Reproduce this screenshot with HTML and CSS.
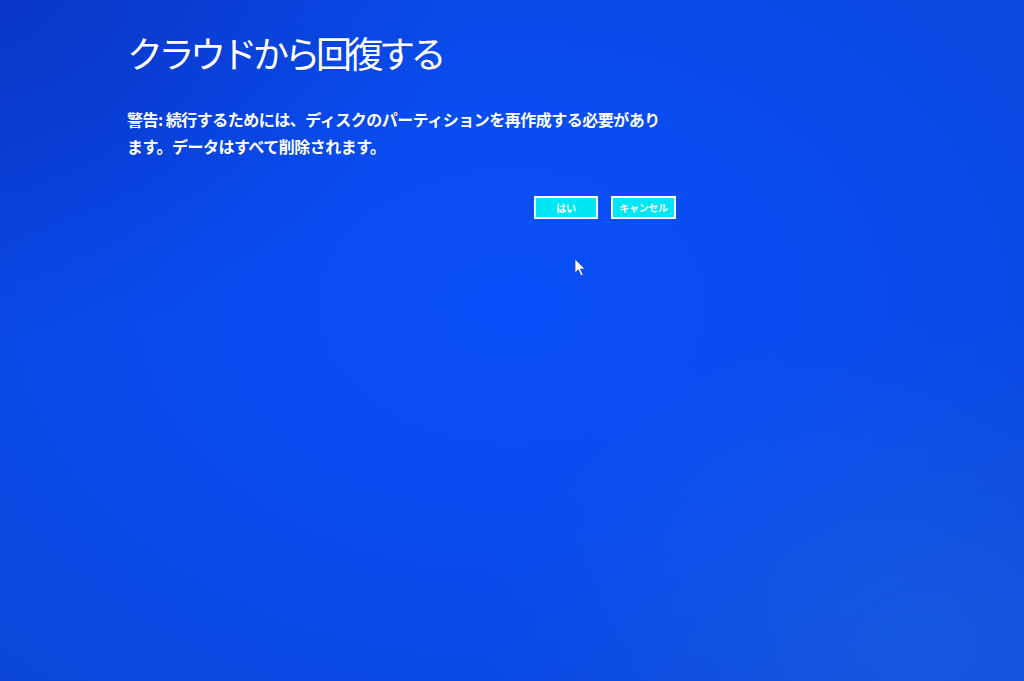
FILE: index.html
```html
<!DOCTYPE html>
<html lang="ja">
<head>
<meta charset="utf-8">
<title>クラウドから回復する</title>
<link rel="stylesheet" href="styles.css">
</head>
<body>
<div class="screen">
  <main class="content">
    <h1 class="title">クラウドから回復する</h1>
    <p class="message">警告: 続行するためには、ディスクのパーティションを再作成する必要があります。データはすべて削除されます。</p>
    <div class="actions">
      <button class="btn btn-yes">はい</button>
      <button class="btn btn-cancel">キャンセル</button>
    </div>
  </main>
  <svg class="cursor" width="13" height="19" viewBox="0 0 13 19" aria-hidden="true">
    <path d="M1 1 L1 15 L4.3 11.8 L7 17.8 L9.2 16.8 L6.6 11 L11 11 Z" fill="#ffffff" stroke="#1f3fd8" stroke-width="0.8"/>
  </svg>
</div>
</body>
</html>
```
FILE: styles.css
```css
html, body {
  margin: 0;
  padding: 0;
  width: 1024px;
  height: 681px;
  overflow: hidden;
}
body {
  font-family: "Noto Sans CJK JP", "Noto Sans", sans-serif;
  color: #ffffff;
}
.screen {
  position: relative;
  width: 1024px;
  height: 681px;
  background:
    radial-gradient(ellipse 45% 50% at 0% 0%, rgba(8,40,180,0.55), rgba(8,40,180,0) 100%),
    radial-gradient(ellipse 60% 70% at 90% 95%, rgba(40,110,225,0.45), rgba(40,110,225,0) 70%),
    radial-gradient(ellipse 75% 80% at 50% 45%, #0a50f8 0%, #094cf0 40%, #0a48e2 70%, #0b46d6 100%);
}
.content {
  padding: 30px 0 0 127px;
  width: 549px;
}
.title {
  margin: 0;
  font-size: 36px;
  font-weight: 400;
  line-height: 44px;
  letter-spacing: -4.5px;
}
.message {
  margin: 32px 0 0 0;
  width: 538px;
  font-size: 16px;
  font-weight: 700;
  line-height: 27px;
  letter-spacing: -0.5px;
}
.actions {
  display: flex;
  justify-content: flex-end;
  gap: 13px;
  margin-top: 36px;
}
.btn {
  box-sizing: border-box;
  height: 23px;
  padding: 0;
  border: 2px solid #ffffff;
  background: #00e6f2;
  color: #ffffff;
  font-family: "Noto Sans CJK JP", sans-serif;
  font-size: 10px;
  font-weight: 700;
  line-height: 19px;
  letter-spacing: -0.3px;
}
.btn-yes { width: 64px; }
.btn-cancel { width: 65px; }
.cursor {
  position: absolute;
  left: 574px;
  top: 258px;
}
```
